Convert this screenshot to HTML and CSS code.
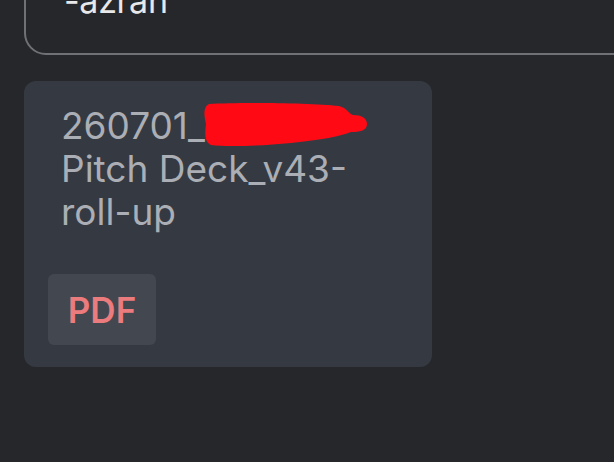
FILE: index.html
```html
<!DOCTYPE html>
<html>
<head>
<meta charset="utf-8">
<link rel="stylesheet" href="styles.css">
</head>
<body>
<div class="page">
  <div class="note">
    <p class="note-text">-azran</p>
  </div>
  <div class="card">
    <div class="title">
      <span class="line">260701_<span class="redact-anchor"><svg class="redact" width="168" height="46" viewBox="0 0 168 46"><path d="M8 2 C40 0 110 1 138 4 C146 6 148 12 152 13 C160 13 166 16 166 22 C166 29 158 30 150 30 C140 34 120 38 90 41 C60 44 25 45 10 43 C3 40 4 30 5 22 C3 14 2 5 8 2 Z" fill="#ff0a14"/></svg></span></span>
      <span class="line">Pitch Deck_v43-</span>
      <span class="line">roll-up</span>
    </div>
    <div class="badge">PDF</div>
  </div>
</div>
</body>
</html>
```

FILE: styles.css
```css
* { box-sizing: border-box; }
html, body {
  margin: 0;
  padding: 0;
  background: #26272b;
  width: 614px;
  height: 462px;
  overflow: hidden;
  font-family: Inter, "Noto Sans", "Liberation Sans", sans-serif;
}
.page {
  padding-left: 24px;
}
.note {
  margin-top: -40px;
  height: 95px;
  margin-right: -40px;
  border: 2px solid #707176;
  border-radius: 22px;
  padding-left: 38px;
  padding-top: 19px;
}
.note-text {
  margin: 0;
  color: #e8e8ea;
  font-size: 34px;
  line-height: 40px;
  letter-spacing: -0.3px;
}
.card {
  margin-top: 26px;
  width: 408px;
  height: 286px;
  background: #353a42;
  border-radius: 12px;
  padding: 23px 24px 22px 24px;
  display: flex;
  flex-direction: column;
  align-items: flex-start;
}
.title {
  margin-left: 13px;
  color: #abaeb4;
  font-size: 37px;
  line-height: 43px;
  display: flex;
  flex-direction: column;
}
.line { white-space: nowrap; }
.redact-anchor {
  position: relative;
  display: inline-block;
  width: 0;
  height: 0;
}
.redact {
  position: absolute;
  left: -4px;
  top: -37px;
}
.badge {
  margin-top: auto;
  width: 108px;
  height: 71px;
  background: #43474f;
  border-radius: 6px;
  color: #ec7b7d;
  font-weight: 600;
  font-size: 35px;
  display: flex;
  align-items: center;
  justify-content: center;
}
```
